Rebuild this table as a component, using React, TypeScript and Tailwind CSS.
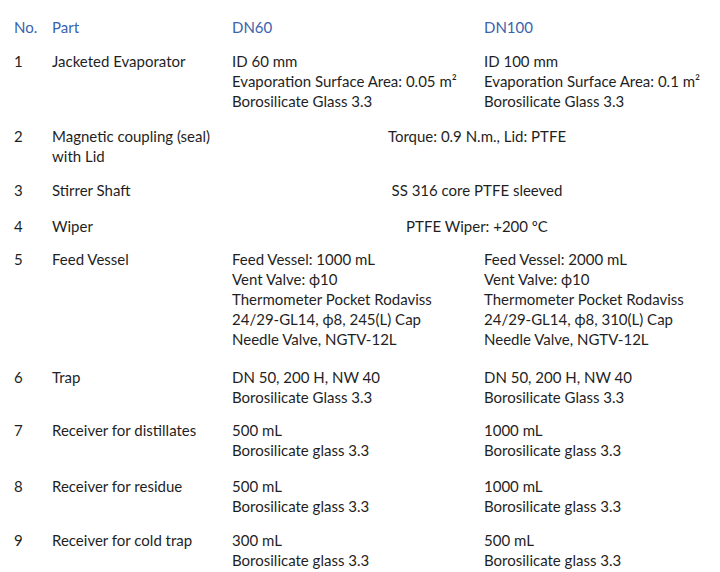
const rows: {
  no: string
  part: string[]
  dn60?: string[]
  dn100?: string[]
  both?: string
  mt: string
}[] = [
  {
    no: '1',
    part: ['Jacketed Evaporator'],
    dn60: ['ID 60 mm', 'Evaporation Surface Area: 0.05 m²', 'Borosilicate Glass 3.3'],
    dn100: ['ID 100 mm', 'Evaporation Surface Area: 0.1 m²', 'Borosilicate Glass 3.3'],
    mt: 'mt-[14px]',
  },
  { no: '2', part: ['Magnetic coupling (seal)', 'with Lid'], both: 'Torque: 0.9 N.m., Lid: PTFE', mt: 'mt-[15px]' },
  { no: '3', part: ['Stirrer Shaft'], both: 'SS 316 core PTFE sleeved', mt: 'mt-[14px]' },
  { no: '4', part: ['Wiper'], both: 'PTFE Wiper: +200 ºC', mt: 'mt-[16px]' },
  {
    no: '5',
    part: ['Feed Vessel'],
    dn60: [
      'Feed Vessel: 1000 mL',
      'Vent Valve: ϕ10',
      'Thermometer Pocket Rodaviss',
      '24/29-GL14, ϕ8, 245(L) Cap',
      'Needle Valve, NGTV-12L',
    ],
    dn100: [
      'Feed Vessel: 2000 mL',
      'Vent Valve: ϕ10',
      'Thermometer Pocket Rodaviss',
      '24/29-GL14, ϕ8, 310(L) Cap',
      'Needle Valve, NGTV-12L',
    ],
    mt: 'mt-[13px]',
  },
  {
    no: '6',
    part: ['Trap'],
    dn60: ['DN 50, 200 H, NW 40', 'Borosilicate Glass 3.3'],
    dn100: ['DN 50, 200 H, NW 40', 'Borosilicate Glass 3.3'],
    mt: 'mt-[18px]',
  },
  {
    no: '7',
    part: ['Receiver for distillates'],
    dn60: ['500 mL', 'Borosilicate glass 3.3'],
    dn100: ['1000 mL', 'Borosilicate glass 3.3'],
    mt: 'mt-[13px]',
  },
  {
    no: '8',
    part: ['Receiver for residue'],
    dn60: ['500 mL', 'Borosilicate glass 3.3'],
    dn100: ['1000 mL', 'Borosilicate glass 3.3'],
    mt: 'mt-[16px]',
  },
  {
    no: '9',
    part: ['Receiver for cold trap'],
    dn60: ['300 mL', 'Borosilicate glass 3.3'],
    dn100: ['500 mL', 'Borosilicate glass 3.3'],
    mt: 'mt-[14px]',
  },
]

function Lines({ items }: { items: string[] }) {
  return (
    <div>
      {items.map((t, i) => (
        <div key={i}>{t}</div>
      ))}
    </div>
  )
}

export default function App() {
  return (
    <div
      className="w-[720px] h-[572px] bg-white overflow-hidden text-[15px] leading-[20px] text-[#1f1f1f] pt-[17px]"
      style={{ fontFamily: 'Lato, "Open Sans", sans-serif' }}
    >
      {/* header */}
      <div className="grid grid-cols-[52px_180px_252px_236px] text-[#3a63ad]">
        <div className="pl-[14px]">No.</div>
        <div>Part</div>
        <div>DN60</div>
        <div>DN100</div>
      </div>

      {rows.map(row => (
        <div key={row.no} className={`grid grid-cols-[52px_180px_252px_236px] ${row.mt}`}>
          <div className="pl-[14px]">{row.no}</div>
          <Lines items={row.part} />
          {row.both ? (
            <div className="col-span-2 text-center pl-[2px]">{row.both}</div>
          ) : (
            <>
              <Lines items={row.dn60 ?? []} />
              <Lines items={row.dn100 ?? []} />
            </>
          )}
        </div>
      ))}
    </div>
  )
}
